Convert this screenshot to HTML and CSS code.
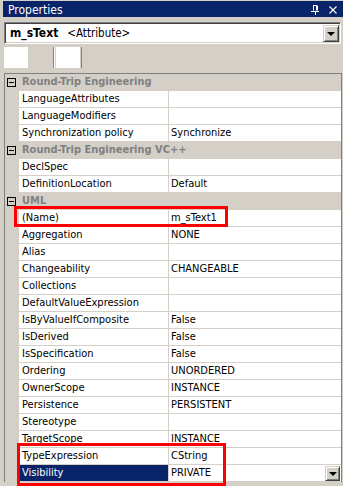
FILE: index.html
```html
<!DOCTYPE html>
<html lang="en">
  <head>
    <meta charset="UTF-8" />
    <meta name="viewport" content="width=device-width, initial-scale=1.0" />
    <title>Properties</title>
    <link rel="stylesheet" href="styles.css">
  </head>
  <body>
    <div class="title">
      <span>Properties</span>
      <div class="title-icons">
        <svg width="8" height="10" viewBox="0 0 8 10">
          <path d="M2 0.5H5.5M2.5 0.5V5.5M5.5 0.5V5.5M6.5 0.5V5.5M0 6.5H8M4.5 6.5V10" stroke="#fff" stroke-width="1" fill="none" />
        </svg>
        <svg width="8" height="8" viewBox="0 0 8 8">
          <path d="M0.5 0.5L7.5 7.5M7.5 0.5L0.5 7.5" stroke="#fff" stroke-width="1.1" fill="none" />
        </svg>
      </div>
    </div>

    <div class="combo">
      <span class="combo-name">m_sText</span>
      <span class="combo-type">&lt;Attribute&gt;</span>
      <span class="drop"><i></i></span>
    </div>

    <div class="toolbar">
      <div class="tool"></div>
      <div class="sep"></div>
      <div class="tool"></div>
      <div class="sep-end"></div>
    </div>

    <div class="grid">
      <div class="row cat"><div class="gutter"><span class="minus"></span></div><div class="label">Round-Trip Engineering</div></div>
      <div class="row"><div class="gutter"></div><div class="name">LanguageAttributes</div><div class="value"></div></div>
      <div class="row"><div class="gutter"></div><div class="name">LanguageModifiers</div><div class="value"></div></div>
      <div class="row"><div class="gutter"></div><div class="name">Synchronization policy</div><div class="value">Synchronize</div></div>

      <div class="row cat"><div class="gutter"><span class="minus"></span></div><div class="label">Round-Trip Engineering VC++</div></div>
      <div class="row"><div class="gutter"></div><div class="name">DeclSpec</div><div class="value"></div></div>
      <div class="row"><div class="gutter"></div><div class="name">DefinitionLocation</div><div class="value">Default</div></div>

      <div class="row cat"><div class="gutter"><span class="minus"></span></div><div class="label">UML</div></div>
      <div class="row"><div class="gutter"></div><div class="name">(Name)</div><div class="value">m_sText1</div></div>
      <div class="row"><div class="gutter"></div><div class="name">Aggregation</div><div class="value">NONE</div></div>
      <div class="row"><div class="gutter"></div><div class="name">Alias</div><div class="value"></div></div>
      <div class="row"><div class="gutter"></div><div class="name">Changeability</div><div class="value">CHANGEABLE</div></div>
      <div class="row"><div class="gutter"></div><div class="name">Collections</div><div class="value"></div></div>
      <div class="row"><div class="gutter"></div><div class="name">DefaultValueExpression</div><div class="value"></div></div>
      <div class="row"><div class="gutter"></div><div class="name">IsByValueIfComposite</div><div class="value">False</div></div>
      <div class="row"><div class="gutter"></div><div class="name">IsDerived</div><div class="value">False</div></div>
      <div class="row"><div class="gutter"></div><div class="name">IsSpecification</div><div class="value">False</div></div>
      <div class="row"><div class="gutter"></div><div class="name">Ordering</div><div class="value">UNORDERED</div></div>
      <div class="row"><div class="gutter"></div><div class="name">OwnerScope</div><div class="value">INSTANCE</div></div>
      <div class="row"><div class="gutter"></div><div class="name">Persistence</div><div class="value">PERSISTENT</div></div>
      <div class="row"><div class="gutter"></div><div class="name">Stereotype</div><div class="value"></div></div>
      <div class="row"><div class="gutter"></div><div class="name">TargetScope</div><div class="value">INSTANCE</div></div>
      <div class="row"><div class="gutter"></div><div class="name">TypeExpression</div><div class="value">CString</div></div>
      <div class="row selected"><div class="gutter"></div><div class="name">Visibility</div><div class="value">PRIVATE<span class="drop small"><i></i></span></div></div>
    </div>

    <div class="mark mark-name"></div>
    <div class="mark mark-type"></div>
  </body>
</html>
```

FILE: styles.css
```css
* {
  box-sizing: border-box;
}

body {
  margin: 0;
  height: 486px;
  overflow: hidden;
  position: relative;
  background: #d4d0c8;
  font-family: Tahoma, "DejaVu Sans Condensed", "Liberation Sans", sans-serif;
  font-size: 11px;
  color: #000;
}

.title {
  margin: 1px 0 0 3px;
  height: 16px;
  background: #0a246a;
  color: #fff;
  display: flex;
  align-items: center;
  justify-content: space-between;
  padding: 1px 6px 0 5px;
  font-size: 12px;
}

.title-icons {
  display: flex;
  align-items: center;
  gap: 10px;
}

.title-icons svg {
  display: block;
}

.combo {
  margin: 5px 2px 0 4px;
  height: 22px;
  background: #fff;
  border: 1px solid #808080;
  border-right-color: #fff;
  border-bottom-color: #fff;
  box-shadow: inset 1px 1px #404040, inset -1px -1px #d4d0c8;
  display: flex;
  align-items: center;
  padding: 0 1px 0 5px;
}

.combo-name {
  font-weight: bold;
  font-size: 12px;
  margin-right: 9px;
}

.combo-type {
  flex: 1;
  font-size: 11.5px;
}

.drop {
  width: 16px;
  height: 17px;
  background: #d4d0c8;
  border: 1px solid #404040;
  border-top-color: #d4d0c8;
  border-left-color: #d4d0c8;
  box-shadow: inset 1px 1px #fff, inset -1px -1px #808080;
  display: flex;
  align-items: center;
  justify-content: center;
}

.drop i {
  width: 0;
  height: 0;
  border-left: 4px solid transparent;
  border-right: 4px solid transparent;
  border-top: 4px solid #000;
  margin-top: 1px;
}

.drop.small {
  width: 15px;
  height: 15px;
  margin-left: auto;
  margin-right: 1px;
}

.toolbar {
  margin: 3px 0 0 4px;
  height: 21px;
  display: flex;
}

.tool {
  width: 24px;
  height: 21px;
  background: #fff;
}

.sep {
  width: 2px;
  margin: 0 1px 0 25px;
  border-left: 1px solid #808080;
  border-right: 1px solid #fff;
}

.sep-end {
  width: 1px;
  margin-left: 1px;
  background: #808080;
}

.grid {
  margin: 5px 1px 0 4px;
  border: 1px solid #808080;
  border-bottom: none;
}

.row {
  display: flex;
  height: 17px;
  line-height: 16px;
}

.gutter {
  width: 14px;
  flex: none;
}

.name {
  width: 150px;
  flex: none;
  background: #fff;
  border-right: 1px solid #d4d0c8;
  border-bottom: 1px solid #d4d0c8;
  padding-left: 3px;
  white-space: nowrap;
  overflow: hidden;
}

.value {
  flex: 1;
  background: #fff;
  border-bottom: 1px solid #d4d0c8;
  padding-left: 2px;
  display: flex;
  align-items: flex-start;
  white-space: nowrap;
}

.cat .label {
  padding-left: 3px;
  font-weight: bold;
  color: #808080;
  white-space: nowrap;
}

.minus {
  display: block;
  width: 9px;
  height: 9px;
  margin: 4px 0 0 2px;
  border: 1px solid #000;
  position: relative;
}

.minus::after {
  content: "";
  position: absolute;
  left: 1px;
  top: 3px;
  width: 5px;
  height: 1px;
  background: #000;
}

.selected .name {
  background: #0a246a;
  color: #fff;
}

.selected .drop {
  margin-top: 1px;
}

.mark {
  position: absolute;
  border: 3px solid #ff0000;
}

.mark-name {
  left: 14px;
  top: 206px;
  width: 214px;
  height: 21px;
}

.mark-type {
  left: 17px;
  top: 443px;
  width: 209px;
  height: 43px;
}
```
